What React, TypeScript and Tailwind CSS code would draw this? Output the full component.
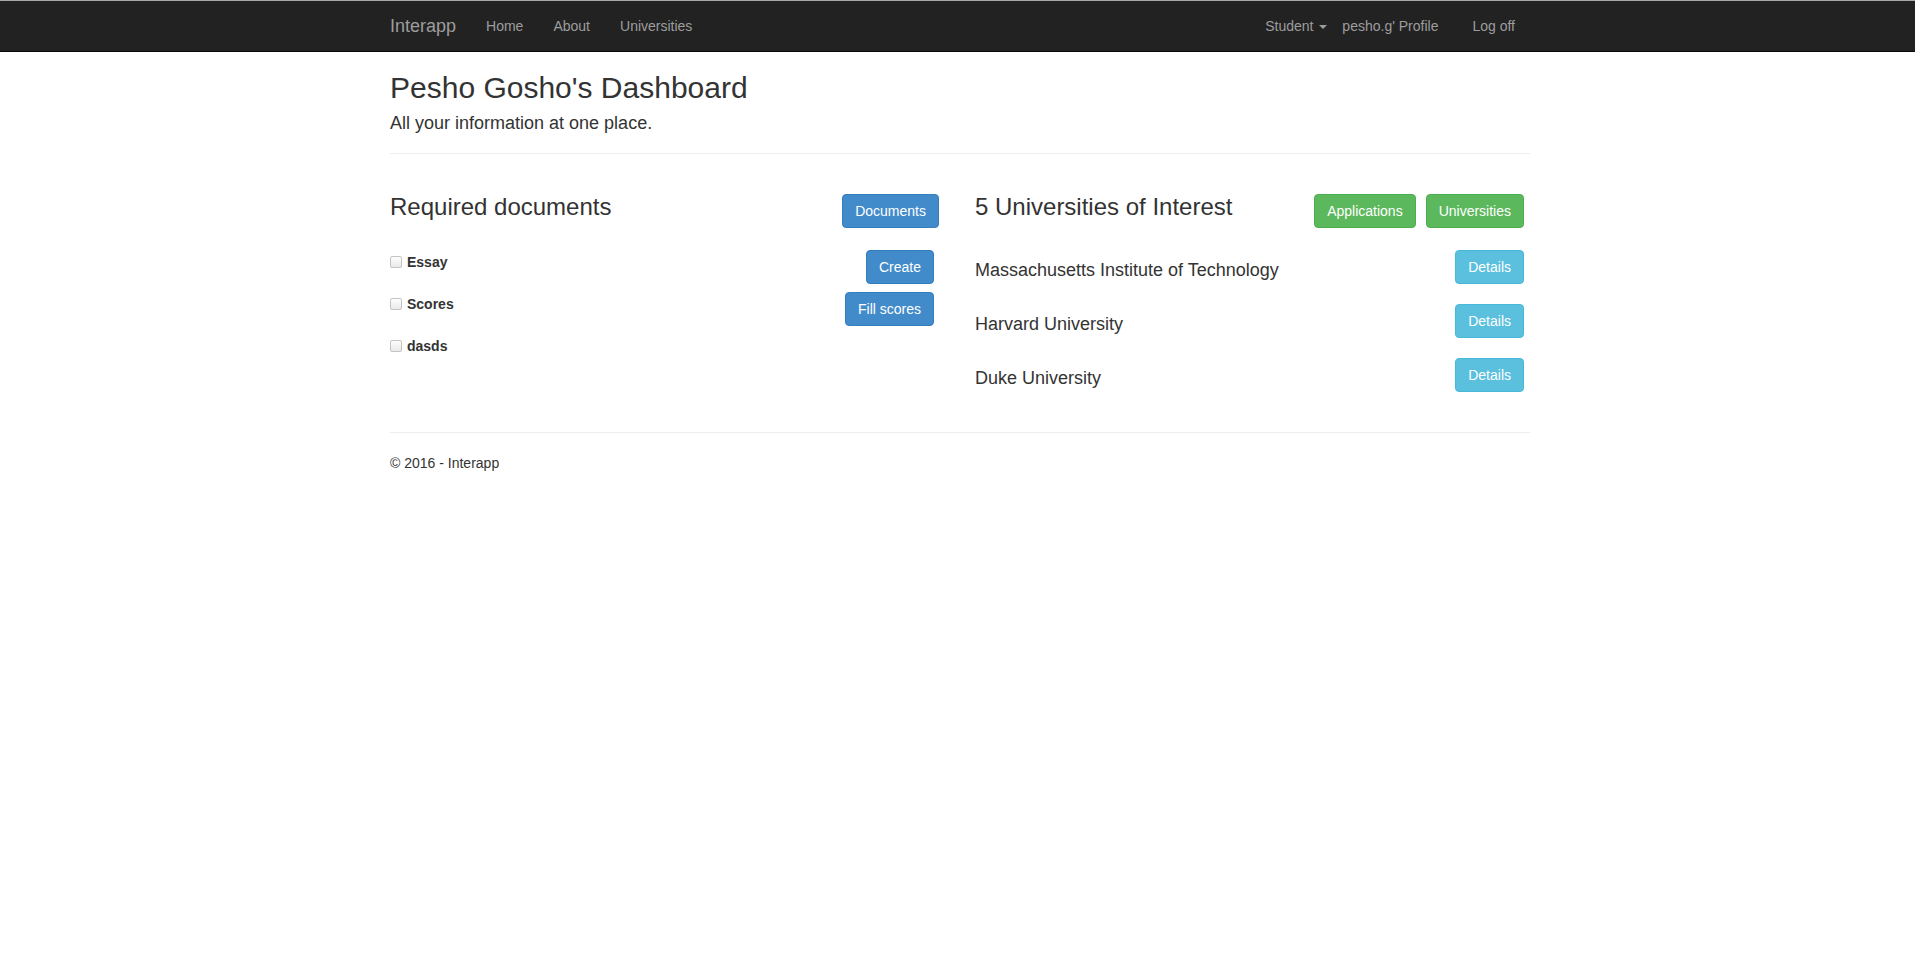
import React from 'react';

const btnBase =
  'inline-block rounded-[4px] border px-[12px] py-[6px] text-[14px] leading-[20px] text-white whitespace-nowrap';

const btnColor: Record<string, string> = {
  primary: 'bg-[#428bca] border-[#357ebd]',
  success: 'bg-[#5cb85c] border-[#4cae4c]',
  info: 'bg-[#5bc0de] border-[#46b8da]',
};

const Btn = ({ kind, children, className = '' }: any) => (
  <a href="#" className={`${btnBase} ${btnColor[kind]} ${className}`}>
    {children}
  </a>
);

const documents = [
  { name: 'Essay', action: 'Create' },
  { name: 'Scores', action: 'Fill scores' },
  { name: 'dasds', action: null },
];

const universities = ['Massachusetts Institute of Technology', 'Harvard University', 'Duke University'];

const Checkbox = () => (
  <span className="mt-[4px] inline-block h-[12px] w-[12px] shrink-0 rounded-[2px] border border-[#c4c4c4] bg-linear-to-b from-[#fdfdfd] to-[#e9e9e9]" />
);

export default function App() {
  return (
    <div className="min-h-screen bg-white font-['Liberation_Sans',Arial,sans-serif] text-[#333]">
      {/* Navbar */}
      <nav className="border-t border-b border-t-[#a9a9a9] border-b-[#080808] bg-[#222]">
        <div className="mx-auto flex h-[50px] w-[1175px] items-start pl-[20px] pr-[15px]">
          <a href="#" className="py-[15px] pr-[15px] text-[18px] leading-[20px] text-[#9d9d9d]">
            Interapp
          </a>
          <ul className="flex">
            {['Home', 'About', 'Universities'].map((l) => (
              <li key={l}>
                <a href="#" className="block px-[15px] py-[15px] text-[14px] leading-[20px] text-[#9d9d9d]">
                  {l}
                </a>
              </li>
            ))}
          </ul>
          <ul className="ml-auto flex">
            <li>
              <a href="#" className="block py-[15px] pl-[15px] text-[14px] leading-[20px] text-[#9d9d9d]">
                Student{' '}
                <span className="ml-[2px] inline-block h-0 w-0 border-x-[4px] border-t-[4px] border-x-transparent border-t-[#9d9d9d] align-middle" />
              </a>
            </li>
            <li>
              <a href="#" className="block py-[15px] pl-[15px] pr-[19px] text-[14px] leading-[20px] text-[#9d9d9d]">
                pesho.g' Profile
              </a>
            </li>
            <li>
              <a href="#" className="block px-[15px] py-[15px] text-[14px] leading-[20px] text-[#9d9d9d]">
                Log off
              </a>
            </li>
          </ul>
        </div>
      </nav>

      <div className="mx-auto w-[1175px] pl-[20px] pr-[15px] pt-[19px]">
        {/* Header */}
        <h2 className="text-[30px] leading-[33px]">Pesho Gosho's Dashboard</h2>
        <p className="mt-[9px] text-[18px] leading-[20px]">All your information at one place.</p>
        <hr className="mt-[20px] border-0 border-t border-t-[#eee]" />

        {/* Columns */}
        <div className="mt-[40px] flex">
          <div className="w-[585px] pr-[30px]">
            <div className="flex items-start justify-between">
              <h3 className="text-[24px] leading-[26px]">Required documents</h3>
              <Btn kind="primary" className="mr-[6px]">Documents</Btn>
            </div>
            <div className="mt-[22px] flex flex-col">
              {documents.map((d) => (
                <div key={d.name} className="flex h-[42px] items-start justify-between">
                  <label className="flex items-start gap-[5px] pt-[2px]">
                    <Checkbox />
                    <span className="text-[14px] font-bold leading-[20px]">{d.name}</span>
                  </label>
                  {d.action && (
                    <Btn kind="primary" className="mr-[11px]">
                      {d.action}
                    </Btn>
                  )}
                </div>
              ))}
            </div>
          </div>

          <div className="w-[555px]">
            <div className="flex items-start justify-between">
              <h3 className="text-[24px] leading-[26px]">5 Universities of Interest</h3>
              <div className="mr-[6px] flex gap-[10px]">
                <Btn kind="success">Applications</Btn>
                <Btn kind="success">Universities</Btn>
              </div>
            </div>
            <div className="mt-[22px] flex flex-col gap-[20px]">
              {universities.map((u) => (
                <div key={u} className="flex h-[34px] items-start justify-between">
                  <span className="pt-[10px] text-[18px] leading-[20px]">{u}</span>
                  <Btn kind="info" className="mr-[6px]">Details</Btn>
                </div>
              ))}
            </div>
          </div>
        </div>

        {/* Footer */}
        <hr className="mt-[40px] border-0 border-t border-t-[#eee]" />
        <footer className="mt-[20px]">
          <p className="text-[14px] leading-[20px]">© 2016 - Interapp</p>
        </footer>
      </div>
    </div>
  );
}
